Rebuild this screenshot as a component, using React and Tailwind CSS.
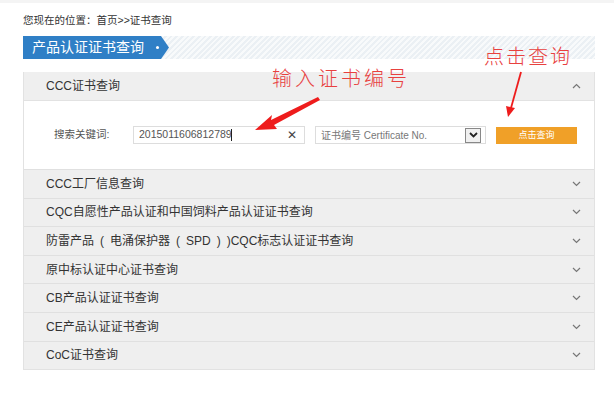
import { useState } from 'react';

const rows = [
  'CCC工厂信息查询',
  'CQC自愿性产品认证和中国饲料产品认证证书查询',
  '防雷产品\u2002(\u2002电涌保护器\u2002(\u2002SPD\u2002)\u2002)CQC标志认证证书查询',
  '原中标认证中心证书查询',
  'CB产品认证证书查询',
  'CE产品认证证书查询',
  'CoC证书查询',
];

function Chevron({ up }) {
  return (
    <svg width="9" height="6" viewBox="0 0 9 6" className="text-[#777]">
      <path
        d={up ? 'M1 5 L4.5 1.5 L8 5' : 'M1 1 L4.5 4.5 L8 1'}
        fill="none"
        stroke="currentColor"
        strokeWidth="1.2"
      />
    </svg>
  );
}

export default function App() {
  const [keyword, setKeyword] = useState('2015011606812789');

  return (
    <div className="relative w-[614px] h-[398px] bg-white overflow-hidden font-['Liberation_Sans','Noto_Sans_CJK_SC',sans-serif] text-[#333]">
      <div className="h-[3px] bg-[#f4f4f4]" />
      <div className="pl-[23px] w-[595px]">
        <p className="mt-[10px] text-[10.5px] leading-[14px] text-[#333]">您现在的位置：首页&gt;&gt;证书查询</p>

        <div className="mt-[9px] h-[23px] flex bg-[repeating-linear-gradient(135deg,#ebf0f4_0,#ebf0f4_2px,#f8fafb_2px,#f8fafb_4px)]">
          <div className="w-[146px] h-full bg-[#2f7fc6] text-white text-[14px] flex items-center pl-[9px] [clip-path:polygon(0_0,calc(100%-8px)_0,100%_50%,calc(100%-8px)_100%,0_100%)]">
            <span>产品认证证书查询</span>
            <span className="ml-[12px] w-[3px] h-[3px] rounded-full bg-white" />
          </div>
        </div>

        <div className="mt-[13px] border border-[#e2e2e2] border-t-0">
          <div className="h-[28px] bg-[#efefef] flex items-center justify-between pl-[22px] pr-[13px] text-[12px]">
            <span>CCC证书查询</span>
            <Chevron up />
          </div>
          <div className="h-[69px] bg-white border-t border-[#e2e2e2] flex items-center text-[10.5px]">
            <span className="ml-[30px] w-[79px] text-[#555]">搜索关键词:</span>
            <div className="w-[172px] h-[18px] border border-[#ddd] flex items-center justify-between pl-[5px] pr-[7px]">
              <div className="flex items-center">
                <input
                  value={keyword}
                  onChange={(e) => setKeyword(e.target.value)}
                  className="w-[92px] text-[10.5px] text-[#555] outline-none bg-transparent"
                />
                <span className="w-px h-[12px] bg-[#222]" />
              </div>
              <span className="text-[12px] text-[#444] leading-none">✕</span>
            </div>
            <div className="ml-[10px] w-[171px] h-[18px] border border-[#ddd] flex items-center justify-between pl-[5px] pr-[4px] text-[#777] text-[10px]">
              <span>证书编号 Certificate No.</span>
              <span className="w-[16px] h-[15px] border border-[#888] bg-[#f0f0f0] flex items-center justify-center">
                <svg width="9" height="6" viewBox="0 0 9 6">
                  <path d="M1 1 L4.5 4.5 L8 1" fill="none" stroke="#222" strokeWidth="1.8" />
                </svg>
              </span>
            </div>
            <button className="ml-[10px] w-[81px] h-[17px] bg-[#f0a028] text-white text-[9px] leading-none">点击查询</button>
          </div>
          {rows.map((r) => (
            <div
              key={r}
              className="h-[28.6px] bg-[#efefef] border-t border-[#e0e0e0] flex items-center justify-between pl-[22px] pr-[13px] text-[12px]"
            >
              <span>{r}</span>
              <Chevron />
            </div>
          ))}
        </div>
      </div>

      {/* red annotations */}
      <span className="absolute left-[272px] top-[66px] text-[20px] leading-[24px] tracking-[3px] text-[#e8413f] font-['Noto_Sans_CJK_SC',sans-serif] font-light">输入证书编号</span>
      <span className="absolute left-[484px] top-[44px] text-[20px] leading-[24px] tracking-[2px] text-[#e8413f] font-['Noto_Sans_CJK_SC',sans-serif] font-light">点击查询</span>
      <svg className="absolute left-0 top-0" width="614" height="398" viewBox="0 0 614 398">
        <path d="M318 97 L271 120 L272 115 L255 130 L277 129 L274 125 L320 100 Z" fill="#ee1c1c" />
        <path d="M521 72 L511 108" stroke="#ee1c1c" strokeWidth="1.8" fill="none" />
        <path d="M506 106 L508 117 L515 108 Z" fill="#ee1c1c" />
      </svg>
    </div>
  );
}
